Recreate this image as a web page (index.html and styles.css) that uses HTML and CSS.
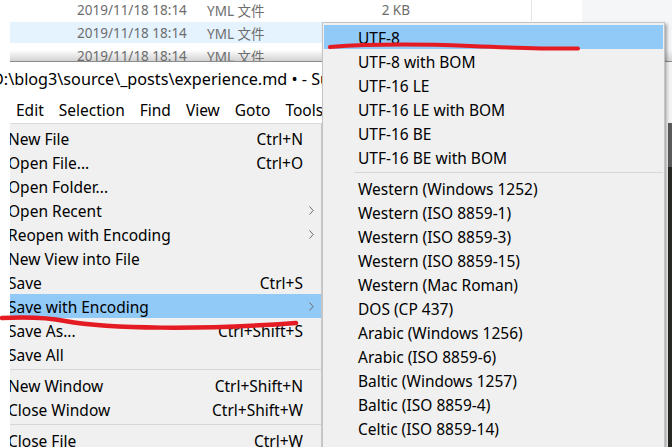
FILE: index.html
```html
<!DOCTYPE html>
<html>
<head>
<meta charset="utf-8">
<link rel="stylesheet" href="styles.css">
</head>
<body>
<div class="explorer">
  <div class="files">
    <div class="row r1"><span></span><span>2019/11/18 18:14</span><span>YML 文件</span><span class="size">2 KB</span><span class="colline"></span></div>
    <div class="row sel"><span></span><span>2019/11/18 18:14</span><span>YML 文件</span><span class="size"></span><span class="colline"></span></div>
    <div class="row"><span></span><span>2019/11/18 18:14</span><span>YML 文件</span><span class="size"></span><span class="colline"></span></div>
  </div>
  <div class="pane"></div>
</div>
<div class="shade"></div>
<div class="window">
  <div class="main">
    <div class="title">D:\blog3\source\_posts\experience.md • - Sublime Text</div>
    <div class="menubar"><span>Edit</span><span>Selection</span><span>Find</span><span>View</span><span>Goto</span><span>Tools</span></div>
    <div class="menu">
      <div class="mi"><span class="lbl">New File</span><span class="key">Ctrl+N</span><span class="arr"></span></div>
      <div class="mi"><span class="lbl">Open File...</span><span class="key">Ctrl+O</span><span class="arr"></span></div>
      <div class="mi"><span class="lbl">Open Folder...</span><span class="key"></span><span class="arr"></span></div>
      <div class="mi"><span class="lbl">Open Recent</span><span class="key"></span><span class="arr"><svg width="5" height="9" viewBox="0 0 5 9"><path d="M0.5 0.5 L4.2 4.5 L0.5 8.5" fill="none" stroke="#6a6a6a" stroke-width="1"/></svg></span></div>
      <div class="mi"><span class="lbl">Reopen with Encoding</span><span class="key"></span><span class="arr"><svg width="5" height="9" viewBox="0 0 5 9"><path d="M0.5 0.5 L4.2 4.5 L0.5 8.5" fill="none" stroke="#6a6a6a" stroke-width="1"/></svg></span></div>
      <div class="mi"><span class="lbl">New View into File</span><span class="key"></span><span class="arr"></span></div>
      <div class="mi"><span class="lbl">Save</span><span class="key">Ctrl+S</span><span class="arr"></span></div>
      <div class="mi hl"><span class="lbl">Save with Encoding</span><span class="key"></span><span class="arr"><svg width="5" height="9" viewBox="0 0 5 9"><path d="M0.5 0.5 L4.2 4.5 L0.5 8.5" fill="none" stroke="#6a6a6a" stroke-width="1"/></svg></span></div>
      <div class="mi"><span class="lbl">Save As...</span><span class="key">Ctrl+Shift+S</span><span class="arr"></span></div>
      <div class="mi"><span class="lbl">Save All</span><span class="key"></span><span class="arr"></span></div>
      <div class="sep"></div>
      <div class="mi"><span class="lbl">New Window</span><span class="key">Ctrl+Shift+N</span><span class="arr"></span></div>
      <div class="mi"><span class="lbl">Close Window</span><span class="key">Ctrl+Shift+W</span><span class="arr"></span></div>
      <div class="sep"></div>
      <div class="mi"><span class="lbl">Close File</span><span class="key">Ctrl+W</span><span class="arr"></span></div>
    </div>
  </div>
  <div class="edge"></div>
</div>

<div class="submenu">
  <div class="si hl">UTF-8</div>
  <div class="si">UTF-8 with BOM</div>
  <div class="si">UTF-16 LE</div>
  <div class="si">UTF-16 LE with BOM</div>
  <div class="si">UTF-16 BE</div>
  <div class="si">UTF-16 BE with BOM</div>
  <div class="ssep"></div>
  <div class="si">Western (Windows 1252)</div>
  <div class="si">Western (ISO 8859-1)</div>
  <div class="si">Western (ISO 8859-3)</div>
  <div class="si">Western (ISO 8859-15)</div>
  <div class="si">Western (Mac Roman)</div>
  <div class="si">DOS (CP 437)</div>
  <div class="si">Arabic (Windows 1256)</div>
  <div class="si">Arabic (ISO 8859-6)</div>
  <div class="si">Baltic (Windows 1257)</div>
  <div class="si">Baltic (ISO 8859-4)</div>
  <div class="si">Celtic (ISO 8859-14)</div>
  <div class="si">Central European (Windows 1250)</div>
</div>

<svg class="marks" width="672" height="447" viewBox="0 0 672 447">
  <path d="M330 47 C 370 44, 420 44, 470 46 S 550 49, 578 48.5" fill="none" stroke="#e41b22" stroke-width="4" stroke-linecap="round"/>
  <path d="M2 318 C 25 317, 45 317, 65 321 C 110 329, 200 330, 296 323" fill="none" stroke="#e41b22" stroke-width="4.5" stroke-linecap="round"/>
</svg>
</body>
</html>
```

FILE: styles.css
```css
body {
  margin: 0;
  width: 672px;
  height: 447px;
  overflow: hidden;
  background: #ffffff;
  position: relative;
  font-family: "Noto Sans", "Noto Sans CJK SC", sans-serif;
  color: #000;
}

.explorer {
  display: flex;
  height: 61px;
  overflow: hidden;
}

.files {
  margin-left: 10px;
  width: 572px;
  background: linear-gradient(#ffffff 50px, #d2d2d2 61px);
}

.pane {
  flex: 1;
  background: linear-gradient(#f5f6f8 50px, #d6d6d6 61px);
}

.shade {
  height: 1px;
  margin-left: 10px;
  background: #8c8c8c;
}

.row {
  display: grid;
  grid-template-columns: 67px 130px 123px 80px 121px 1px;
  height: 23px;
  align-items: center;
  font-size: 13.5px;
  color: #6d6d6d;
  font-family: "Noto Sans", "Noto Sans CJK SC", sans-serif;
}

.r1 {
  margin-top: -2px;
}

.sel {
  box-sizing: border-box;
  padding: 1px 0;
  background: #e5f3ff;
  background-clip: content-box;
}

.size {
  text-align: right;
}

.colline {
  height: 100%;
  background: #e5e5e5;
  grid-column: 6;
}

.window {
  display: flex;
  height: 385px;
}

.main {
  flex: 1;
  display: flex;
  flex-direction: column;
  overflow: hidden;
}

.edge {
  width: 4px;
  background: linear-gradient(#f3f3f3 0 61px, #5a5a5a 61px 105px, #272822 105px);
}

.title {
  height: 35px;
  line-height: 35px;
  font-size: 16.2px;
  white-space: nowrap;
  margin-left: -8px;
}

.menubar {
  height: 26px;
  display: flex;
  align-items: center;
  gap: 15px;
  padding-left: 16px;
  font-size: 15.5px;
  white-space: nowrap;
}

.menu {
  margin-left: 10px;
  width: 311px;
  flex: 1;
  border-top: 1px solid #dadada;
  border-right: 1px solid #cccccc;
  background: #f0f0f0;
  padding-top: 2px;
  overflow: hidden;
}

.mi {
  display: flex;
  align-items: center;
  box-sizing: border-box;
  height: 24px;
  padding-top: 1px;
  margin-left: -2px;
  font-size: 15.5px;
  white-space: nowrap;
}

.mi.hl {
  background: #91c9f7;
}

.lbl {
  flex: 1;
}

.arr {
  width: 12px;
  padding-left: 6px;
  display: flex;
  align-items: center;
}

.sep {
  height: 1px;
  background: #d7d7d7;
  margin: 3px 0;
}

.submenu {
  position: absolute;
  left: 322px;
  top: 22px;
  width: 341px;
  height: 440px;
  border: 1px solid #c4c4c4;
  background: #f0f0f0;
  padding-top: 2px;
  box-shadow: 2px 2px 3px rgba(0, 0, 0, 0.35);
}

.si {
  box-sizing: border-box;
  height: 24px;
  line-height: 24px;
  padding-top: 1px;
  margin: 0 1px;
  padding-left: 34px;
  font-size: 15.5px;
  white-space: nowrap;
}

.si.hl {
  background: #91c9f7;
}

.ssep {
  height: 1px;
  background: #d7d7d7;
  margin: 3px 1px 3px 31px;
}

.marks {
  position: absolute;
  left: 0;
  top: 0;
  pointer-events: none;
}
```
